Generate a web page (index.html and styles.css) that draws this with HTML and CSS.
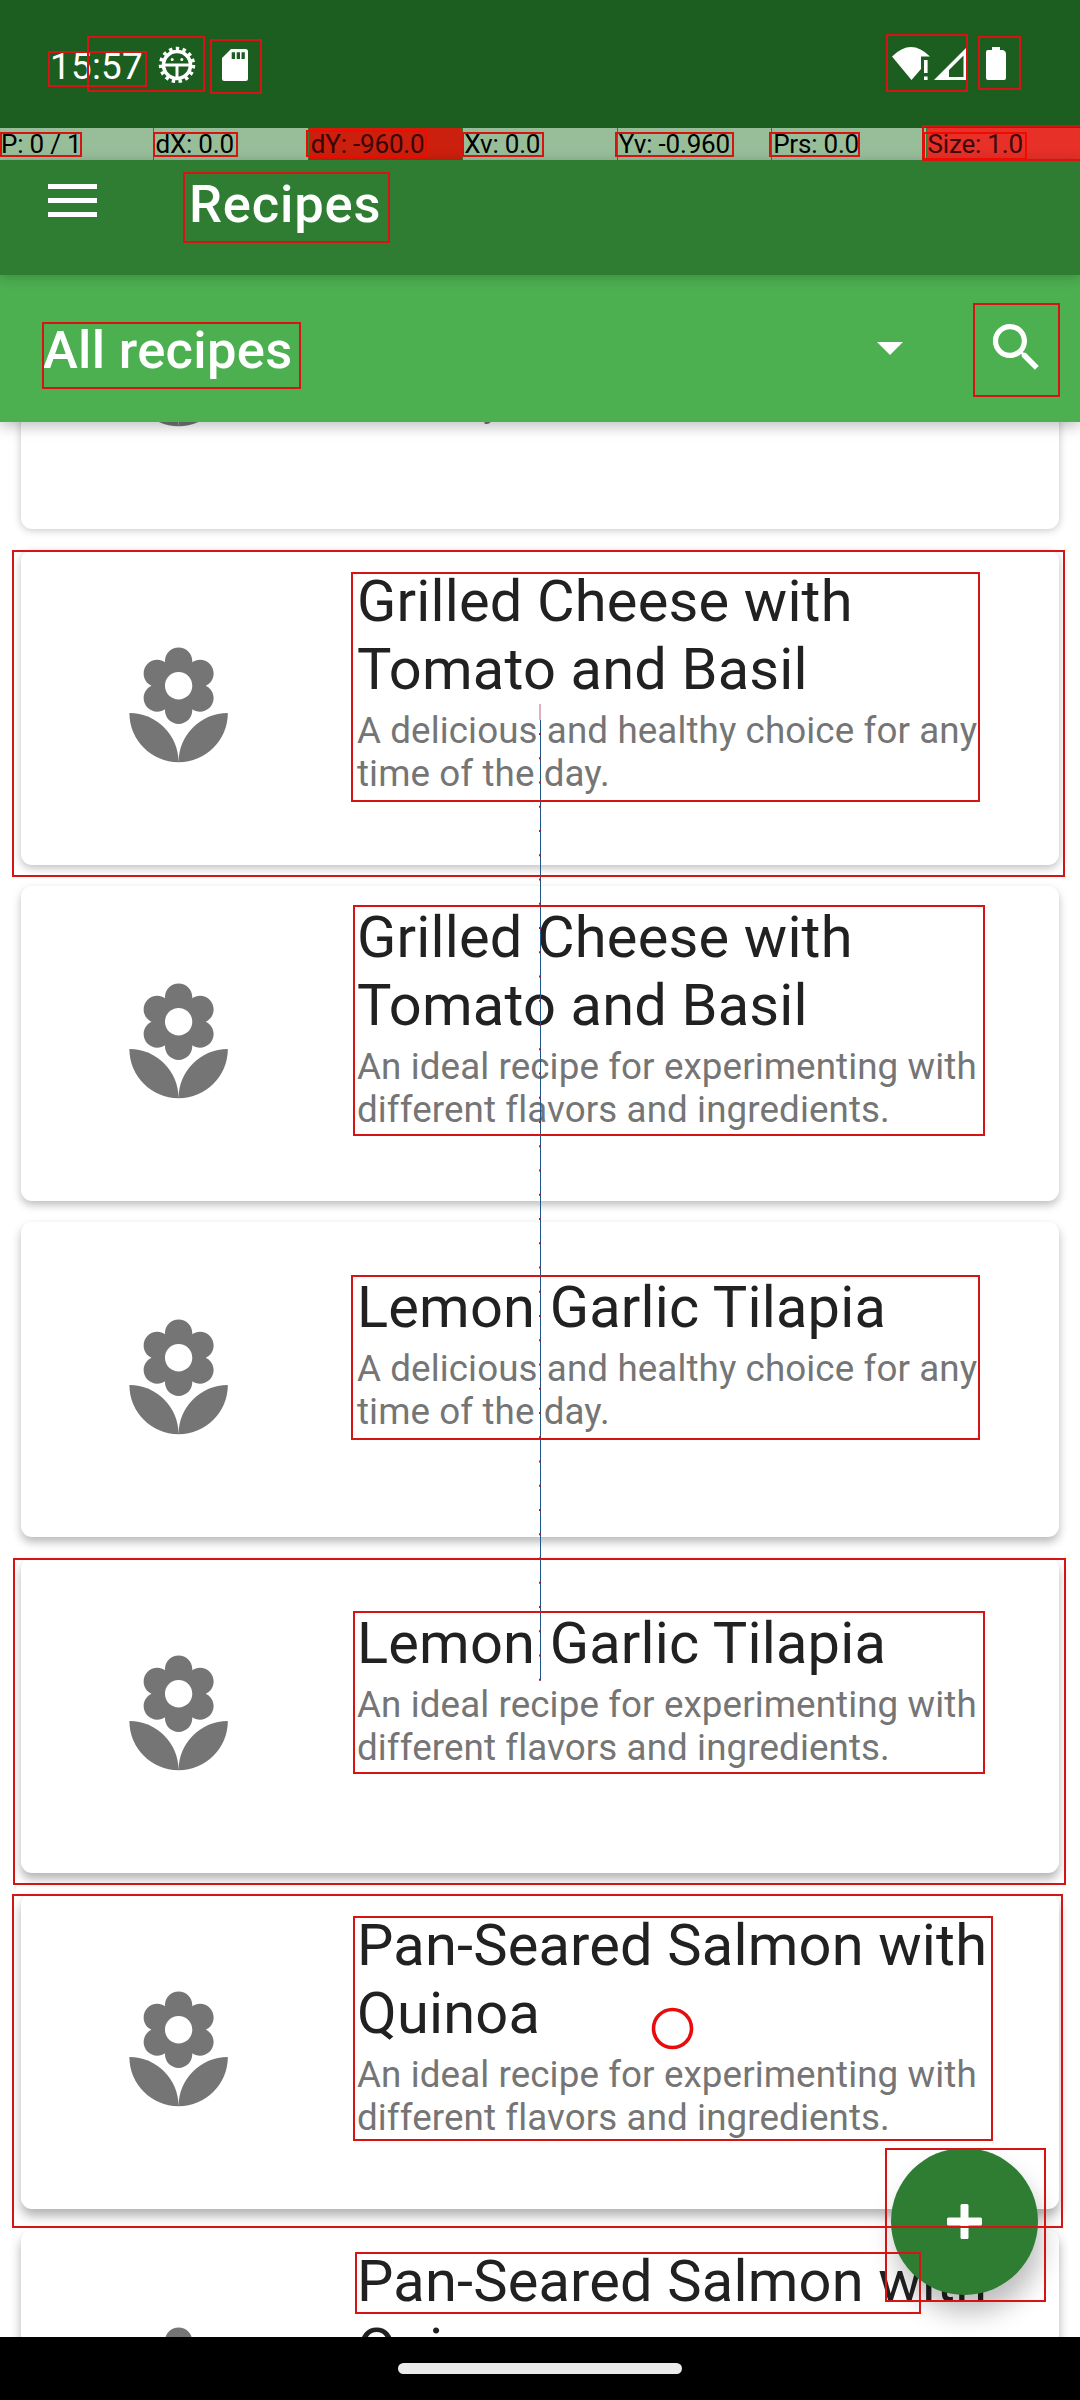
FILE: index.html
```
<!DOCTYPE html>
<html lang="en">
<head>
<meta charset="utf-8">
<title>Recipes</title>
<link rel="stylesheet" href="styles.css">
</head>
<body>
<svg width="0" height="0" class="defs">
  <symbol id="flower" viewBox="0 0 24 24"><path d="M12 22c4.97 0 9-4.03 9-9-4.97 0-9 4.03-9 9zM5.6 10.25c0 1.38 1.12 2.5 2.5 2.5.53 0 1.01-.16 1.42-.44l-.02.19c0 1.38 1.12 2.5 2.5 2.5s2.5-1.12 2.5-2.5l-.02-.19c.4.28.89.44 1.42.44 1.38 0 2.5-1.12 2.5-2.5 0-1-.59-1.85-1.43-2.25.84-.4 1.43-1.25 1.43-2.25 0-1.38-1.12-2.5-2.5-2.5-.53 0-1.01.16-1.42.44l.02-.19C14.5 2.12 13.38 1 12 1S9.5 2.12 9.5 3.5l.02.19c-.4-.28-.89-.44-1.42-.44-1.38 0-2.5 1.12-2.5 2.5 0 1 .59 1.85 1.43 2.25-.84.4-1.43 1.25-1.43 2.25zM12 5.5c1.38 0 2.5 1.12 2.5 2.5s-1.12 2.5-2.5 2.5S9.5 9.38 9.5 8s1.12-2.5 2.5-2.5zM3 13c0 4.97 4.03 9 9 9 0-4.97-4.03-9-9-9z"/></symbol>
</svg>
<div class="screen">
  <header class="status">
    <span class="clock">15:57</span>
    <svg class="bug" width="38" height="38" viewBox="-19 -19 38 38">
      <circle r="13.500" fill="none" stroke="#fff" stroke-width="3.6"/>
      <circle r="16.4" fill="none" stroke="#fff" stroke-width="3.6" stroke-dasharray="3.4 3.47"/>
      <path d="M-14 0H14M0 0V14" stroke="#fff" stroke-width="3"/>
      <circle cx="-4.8" cy="-5.500" r="1.500" fill="#fff"/><circle cx="4.8" cy="-5.500" r="1.500" fill="#fff"/>
    </svg>
    <svg class="sd" width="26" height="32" viewBox="0 0 26 32"><path fill="#fff" fill-rule="evenodd" d="M9 0H23.5Q26 0 26 2.5V29.500Q26 32 23.500 32H2.500Q0 32 0 29.500V9zM9.700 3.300V10H13V3.300zM14.700 3.300V10H18V3.300zM19.500 3.300V10H22.800V3.300z"/></svg>
    <svg class="signals" width="114" height="33" viewBox="0 0 114 33">
      <path fill="#fff" d="M0 9.500Q19-9.500 38 9.500H29V22L19.500 33z"/>
      <path fill="#fff" d="M32 13h3.600v13H32zM32 29.500h3.600V33H32z"/>
      <path fill="#fff" fill-rule="evenodd" d="M42 33L74 1V33zM57 30H71.500V8.500L57 23z"/>
      <path fill="#fff" d="M100 0h8v3h3q3 1 3 4V31q0 2-2 2H96q-2 0-2-2V5q0-2 2-2h4z"/>
    </svg>
  </header>
  <div class="pointer">
    <span>P: 0 / 1</span><span>dX: 0.0</span><span class="hot">dY: -960.0</span><span>Xv: 0.0</span><span>Yv: -0.960</span><span>Prs: 0.0</span><span class="size">Size: 1.0</span>
  </div>
  <div class="appbar">
    <svg width="49" height="33" viewBox="0 0 49 33"><path fill="#fff" d="M0 0h49v5H0zM0 14h49v5H0zM0 28h49v5H0z"/></svg>
    <h1>Recipes</h1>
  </div>
  <div class="filter">
    <span class="filter-name">All recipes</span>
    <svg class="caret" width="26" height="13" viewBox="0 0 26 13"><path fill="#fff" d="M0 0h26L13 13z"/></svg>
    <svg class="search" width="63" height="63" viewBox="0 0 24 24"><path fill="#fff" d="M15.500 14h-.79l-.28-.27C15.410 12.590 16 11.110 16 9.500 16 5.910 13.090 3 9.500 3S3 5.910 3 9.500 5.910 16 9.500 16c1.610 0 3.090-.59 4.230-1.570l.27.28v.79l5 4.990L20.490 19l-4.990-5zm-6 0C7.010 14 5 11.990 5 9.500S7.010 5 9.500 5 14 7.010 14 9.500 11.990 14 9.500 14z"/></svg>
  </div>
  <main class="list">
    <article class="card e1"><svg class="flower"><use href="#flower"/></svg><div class="text"><h2>&nbsp;</h2><p>A quick and easy meal, perfect for busy<br>weekdays.</p></div></article>
    <article class="card e2"><svg class="flower"><use href="#flower"/></svg><div class="text"><h2>Grilled Cheese with<br>Tomato and Basil</h2><p>A delicious and healthy choice for any<br>time of the day.</p></div></article>
    <article class="card e3"><svg class="flower"><use href="#flower"/></svg><div class="text"><h2>Grilled Cheese with<br>Tomato and Basil</h2><p>An ideal recipe for experimenting with<br>different flavors and ingredients.</p></div></article>
    <article class="card e4"><svg class="flower"><use href="#flower"/></svg><div class="text"><h2>Lemon Garlic Tilapia</h2><p>A delicious and healthy choice for any<br>time of the day.</p></div></article>
    <article class="card e5"><svg class="flower"><use href="#flower"/></svg><div class="text"><h2>Lemon Garlic Tilapia</h2><p>An ideal recipe for experimenting with<br>different flavors and ingredients.</p></div></article>
    <article class="card e6"><svg class="flower"><use href="#flower"/></svg><div class="text"><h2>Pan-Seared Salmon with<br>Quinoa</h2><p>An ideal recipe for experimenting with<br>different flavors and ingredients.</p></div></article>
    <article class="card e6"><svg class="flower"><use href="#flower"/></svg><div class="text"><h2>Pan-Seared Salmon with<br>Quinoa</h2><p>&nbsp;<br>&nbsp;</p></div></article>
  </main>
  <footer class="nav"><span class="pill"></span></footer>
  <div class="fab"><svg width="35" height="35" viewBox="0 0 35 35"><rect x="13.500" width="8" height="35" rx="1.500" fill="#fff"/><rect y="13.500" width="35" height="8" rx="1.500" fill="#fff"/></svg></div>
  <svg class="overlay" width="1080" height="2400" viewBox="0 0 1080 2400">
    <path d="M540 704V720" stroke="#dfb0c4" stroke-width="2"/>
    <path d="M540.500 720V1679" stroke="#1f5688" stroke-width="1"/>
    <path d="M540 733V1681" stroke="#a02030" stroke-width="2" stroke-dasharray="2 22.250"/>
    <g fill="none" stroke="#d61414" stroke-width="2">
      <rect x="49" y="52" width="97" height="34"/>
      <rect x="88" y="37" width="116" height="54"/>
      <rect x="211" y="40" width="50" height="53"/>
      <rect x="887" y="35" width="80" height="56"/>
      <rect x="979" y="37" width="41" height="52"/>
      <rect x="1" y="133" width="80" height="23"/>
      <rect x="154" y="133" width="83" height="23"/>
      <rect x="307" y="131" width="119" height="25" stroke="#f00a00"/>
      <rect x="463" y="133" width="80" height="23"/>
      <rect x="616" y="133" width="117" height="23"/>
      <rect x="770" y="133" width="89" height="23"/>
      <rect x="924" y="133" width="102" height="26" stroke="#f00a00"/>
      <rect x="923" y="126" width="160" height="34"/>
      <rect x="184" y="173" width="205" height="69"/>
      <rect x="43" y="323" width="257" height="65"/>
      <rect x="974" y="304" width="85" height="92"/>
      <rect x="13" y="551" width="1051" height="325"/>
      <rect x="352" y="573" width="627" height="228"/>
      <rect x="354" y="906" width="630" height="229"/>
      <rect x="352" y="1276" width="627" height="163"/>
      <rect x="14" y="1559" width="1051" height="325"/>
      <rect x="354" y="1612" width="630" height="161"/>
      <rect x="13" y="1895" width="1049" height="332"/>
      <rect x="354" y="1917" width="638" height="223"/>
      <rect x="356" y="2253" width="564" height="60"/>
      <rect x="886" y="2149" width="159" height="152"/>
    </g>
    <circle cx="672.500" cy="2028.500" r="19" fill="none" stroke="#e80c0c" stroke-width="3.600"/>
  </svg>
</div>
</body>
</html>
```
FILE: styles.css
```
body { margin: 0; background: #fff; font-family: Roboto, sans-serif; }
.defs { position: absolute; }
.screen {
  position: relative;
  width: 1080px;
  height: 2400px;
  overflow: hidden;
  display: flex;
  flex-direction: column;
  background: #fff;
}
.status, .pointer, .appbar, .filter, .nav { flex: none; box-sizing: border-box; z-index: 1; }
.status {
  height: 128px;
  display: flex;
  align-items: flex-start;
  padding: 0 74px 0 50px;
  background: #1b5e20;
  color: #fff;
}
.clock { width: 108px; margin-top: 45px; font-size: 36.75px; line-height: 44px; letter-spacing: .3px; }
.bug { margin-top: 46px; }
.sd { margin: 49px 0 0 26px; }
.signals { margin: 47px 0 0 auto; }
.pointer {
  height: 32px;
  display: grid;
  grid-template-columns: repeat(7, 1fr);
  column-gap: 1px;
  background: #2e7d32;
  font-size: 26px;
  line-height: 32px;
  letter-spacing: -.2px;
  white-space: nowrap;
}
.pointer span { padding-left: 1px; background: #98be99; color: #000; }
.pointer .hot { background: #ca200d; color: #3c0505; padding-left: 2px; }
.pointer .size { background: #e63028; color: #3c0808; }
.appbar {
  position: relative;
  z-index: 2;
  height: 115px;
  display: flex;
  align-items: flex-start;
  gap: 91px;
  padding: 24px 48px 0;
  background: #2e7d32;
  box-shadow: 0 2px 12px rgba(0, 0, 0, .22);
}
h1, .filter-name { margin: 0; font-size: 52.5px; line-height: 62px; font-weight: 500; color: #fff; }
h1 { margin-top: -11px; padding-left: 1px; letter-spacing: .8px; }
.filter {
  position: relative;
  height: 147px;
  display: flex;
  align-items: flex-start;
  padding: 0 32px 0 43px;
  background: #4caf50;
  box-shadow: 0 4px 14px rgba(0, 0, 0, .26);
}
.filter-name { flex: 1; margin-top: 44px; letter-spacing: .3px; }
.caret { margin: 67px 82px 0 0; }
.search { margin-top: 41px; }
.list {
  flex: 1;
  min-height: 0;
  display: flex;
  flex-direction: column;
  gap: 21px;
  margin-top: -208px;
  padding: 0 21px;
}
.card {
  flex: none;
  display: flex;
  height: 315px;
  border-radius: 11px;
  background: #fff;
}
.e1 { box-shadow: 0 1px 9px rgba(0, 0, 0, .24); }
.e2 { box-shadow: 0 3px 9px rgba(0, 0, 0, .25); }
.e3 { box-shadow: 0 4px 9px rgba(0, 0, 0, .26); }
.e4 { box-shadow: 0 5px 10px rgba(0, 0, 0, .28); }
.e5 { box-shadow: 0 6px 10px rgba(0, 0, 0, .29); }
.e6 { box-shadow: 0 7px 11px rgba(0, 0, 0, .3); }
.flower { width: 131.25px; height: 131.25px; margin: 92px 113.25px 0 91.5px; fill: #757575; }
.text {
  height: 262.5px;
  display: flex;
  flex-direction: column;
  justify-content: center;
  gap: 5px;
  white-space: nowrap;
}
h2 { margin: -1px 0 1px; font-size: 57.75px; line-height: 68px; font-weight: 400; letter-spacing: .19px; color: #212121; }
p { margin: 0; font-size: 36.75px; line-height: 43px; letter-spacing: .1px; font-variant-ligatures: common-ligatures; color: #757575; }
.nav { height: 63px; display: flex; justify-content: center; padding-top: 26px; background: #000; }
.pill { width: 284px; height: 11px; border-radius: 6px; background: #ebebeb; }
.fab {
  position: absolute;
  left: 891px;
  top: 2148px;
  width: 147px;
  height: 147px;
  display: flex;
  align-items: center;
  justify-content: center;
  border-radius: 50%;
  background: #2e7d32;
  box-shadow: 4px 18px 26px rgba(0, 0, 0, .26);
}
.overlay { position: absolute; left: 0; top: 0; z-index: 3; }
```
